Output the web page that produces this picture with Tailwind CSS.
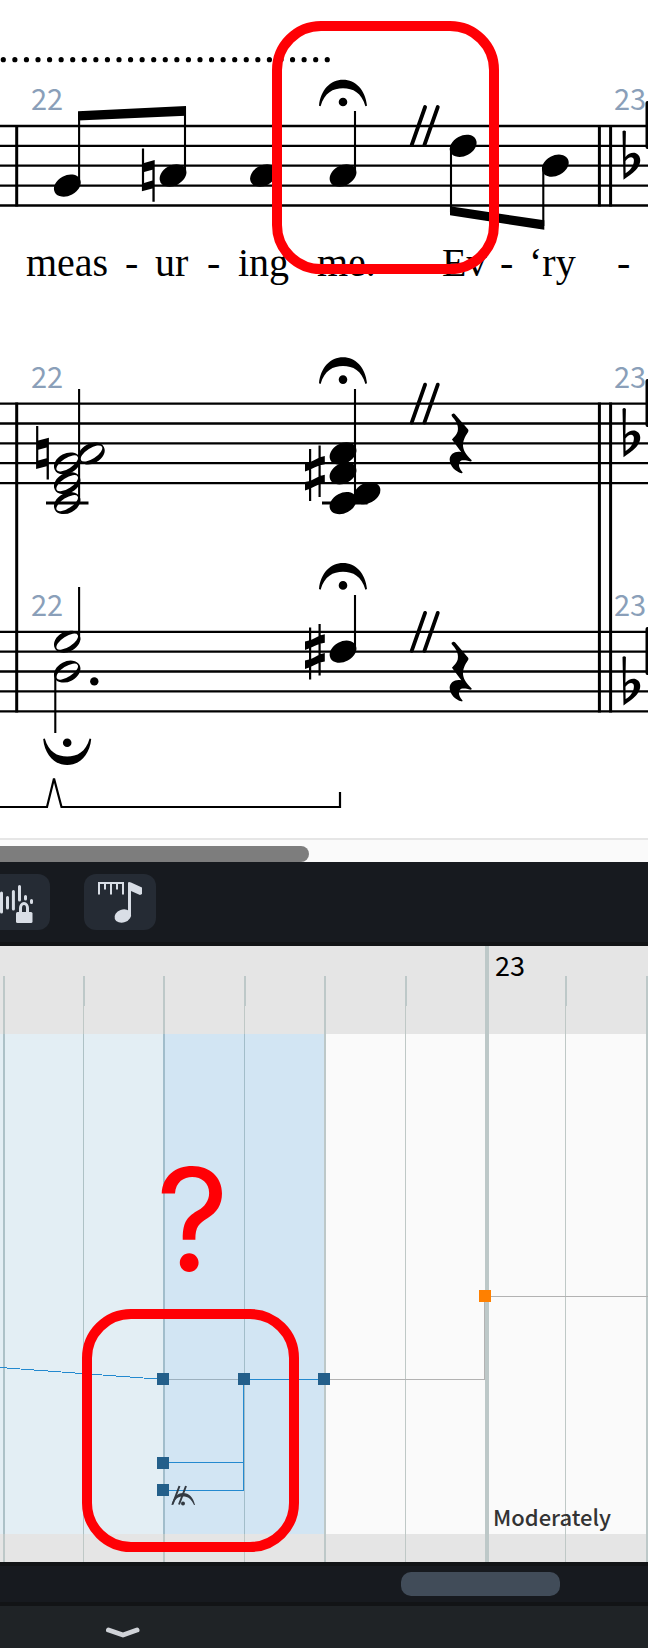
<!DOCTYPE html>
<html lang="en">
<head>
<meta charset="utf-8">
<meta name="viewport" content="width=device-width, initial-scale=1">
<title>Score and tempo track</title>
<script src="https://cdn.jsdelivr.net/npm/@tailwindcss/browser@4"></script>
</head>
<body class="bg-[#1f2326] font-['Noto_Sans_CJK_SC','Noto_Sans',sans-serif]">
<main class="flex min-h-screen flex-col">

  <!-- Score -->
  <section class="bg-white" aria-label="Score">
    <svg class="block h-auto w-full" viewBox="0 0 648 838" role="img" aria-label="Measures 22 and 23">
      <defs>
        <ellipse id="head" rx="14.2" ry="10.1" transform="rotate(-28)"/>
        <path id="half" fill-rule="evenodd" transform="rotate(-28)" d="M-14 0A14 10 0 1 0 14 0A14 10 0 1 0 -14 0ZM-12.4 1A12.4 5.2 -5 1 0 12.4 -1A12.4 5.2 -5 1 0 -12.4 1Z"/>
        <path id="natural" d="M-1.1-27.3H1.1V-12.8L11.7-15.6V26H9.4V12.8L-1.1 15.6ZM1.1-3.6V7.2L9.4 4.8V-6Z" fill-rule="evenodd"/>
        <path id="sharp" d="M-6-24.3h2.2V27.7H-6ZM3.5-27.8H5.7V23.7H3.5ZM-10-10.3Q-5-10.3 0-13.6T9.8-17.4V-9Q5-8.6 0-6T-10-1.8ZM-10 8.7Q-5 8.6 0 5.3T9.8 1.4V9.8Q5 10.2 0 13T-10 17.2Z"/>
        <path id="flat" d="M-1.8-32.2Q-.2-34 1.6-32.2L1.1-6.6C5-11 10.5-12 14-8.6C17.6-4.5 16 1.5 11.5 6.5C8 10.4 3 13.5-.8 16.2ZM1.2-2.6L1.3 9.8C6 7 9.8 2 9.6-3.4C9.2-7.8 4-7 1.2-2.6Z" fill-rule="evenodd"/>
        <path id="fermata" d="M-24 26C-22.5 10-12.5 0 0 0S22.5 10 24 26L22.4 26.6C18.5 13 10 8.6 0 8.6S-18.5 13-22.4 26.6ZM0 18a4.3 4.3 0 1 1 0 8.6a4.3 4.3 0 0 1 0-8.6Z"/>
        <path id="caesura" d="M0 38L13.4 0M12.7 38L26.1 0" fill="none" stroke="#000" stroke-width="3.8" stroke-linecap="round"/>
        <path id="rest" transform="scale(.3333)" d="M2 1C-4 2-3 7 1 11C16 27 19 42 16 54C13 64 6 70-1 78L27 116C9 112-7 121-8 138C-7 160 10 174 27 179C30 180 33 177 29 174C17 160 18 146 27 141C35 139 44 141 55 144C59 144 59 140 56 138C42 124 32 111 32 94C33 76 42 64 47 56C50 51 48 48 45 45L8 2C6 0 4 0 2 1Z"/>
        <path id="staff" d="M0 0H648M0 19.9H648M0 39.7H648M0 59.6H648M0 79.5H648" fill="none" stroke="#000" stroke-width="2.3"/>
      </defs>

      <path d="M3.3 59.7H328" fill="none" stroke="#000" stroke-width="5.2" stroke-linecap="round" stroke-dasharray="0 11.57"/>

      <g font-size="29" fill="#8a9fb9">
        <text x="31" y="110">22</text>
        <text x="614" y="110">23</text>
        <text x="31" y="388">22</text>
        <text x="614" y="388">23</text>
        <text x="31" y="616">22</text>
        <text x="614" y="616">23</text>
      </g>

      <!-- Staves and barlines -->
      <use href="#staff" y="126"/>
      <use href="#staff" y="403.6"/>
      <use href="#staff" y="631.8"/>
      <path d="M16.7 125V206.5M599.4 125V206.5M610.6 125V206.5M16.7 402.5V712.5M599.4 402.5V712.5M610.6 402.5V712.5" stroke="#000" stroke-width="3"/>
      <path d="M46 503H88.5M322 503H367.5" stroke="#000" stroke-width="3"/>

      <!-- Vocal line -->
      <path d="M78 111.3L186 106V115.7L78 120.5ZM450 206.3L544.3 220.3V229.8L450 215.3Z"/>
      <path d="M79.1 112V183M185 107V173M355 111V173M451 148V212M543.3 168V226" stroke="#000" stroke-width="2.1"/>
      <use href="#head" x="67.3" y="185.6"/>
      <use href="#head" x="173" y="175.5"/>
      <use href="#head" x="263.5" y="175.5"/>
      <use href="#head" x="343" y="175.5"/>
      <use href="#head" x="463.2" y="145.8"/>
      <use href="#head" x="555.3" y="165.7"/>
      <use href="#natural" x="143" y="175.7"/>

      <!-- Upper piano staff -->
      <path d="M79.1 389V502M355 389V502" stroke="#000" stroke-width="2.1"/>
      <use href="#half" x="67.2" y="463.4"/>
      <use href="#half" x="67.2" y="483.2"/>
      <use href="#half" x="67.2" y="503.1"/>
      <use href="#half" x="91.5" y="453.5"/>
      <use href="#natural" x="37.2" y="453.4"/>
      <use href="#head" x="343" y="453.5"/>
      <use href="#head" x="343" y="473.3"/>
      <use href="#head" x="367" y="493.2"/>
      <use href="#head" x="343" y="503.1"/>
      <use href="#sharp" x="315" y="473.3"/>
      <use href="#rest" x="452.3" y="413.5"/>

      <!-- Lower piano staff -->
      <path d="M79.1 587V640M55.3 673V733M355 595V650" stroke="#000" stroke-width="2.1"/>
      <use href="#half" x="67.2" y="641.7"/>
      <use href="#half" x="67.2" y="671.6"/>
      <circle cx="94.3" cy="681.4" r="4.2"/>
      <use href="#head" x="343" y="651.7"/>
      <use href="#sharp" x="315" y="651.7"/>
      <use href="#rest" x="452.3" y="641.7"/>

      <use href="#fermata" x="343" y="79.7"/>
      <use href="#fermata" x="343" y="357.3"/>
      <use href="#fermata" x="343" y="563.1"/>
      <use href="#fermata" transform="translate(67.2 765) scale(1 -1)"/>
      <use href="#caesura" x="411.7" y="107"/>
      <use href="#caesura" x="411.7" y="384.6"/>
      <use href="#caesura" x="411.7" y="612.9"/>
      <use href="#flat" x="624.3" y="163.5"/>
      <use href="#flat" x="624.3" y="441.1"/>
      <use href="#flat" x="624.3" y="689.3"/>
      <path d="M647.5 103V147M647.5 381V425M647.5 629V673" stroke="#000" stroke-width="4" stroke-linecap="round"/>

      <path d="M0 807H47L54 778.5L61.5 807H340V792" fill="none" stroke="#000" stroke-width="2.2"/>

      <!-- Lyrics -->
      <g class="font-['Liberation_Serif',serif]" font-size="40">
        <text x="26" y="276">meas</text>
        <text x="125" y="276">-</text>
        <text x="155" y="276">ur</text>
        <text x="207" y="276">-</text>
        <text x="238" y="276">ing</text>
        <text x="317" y="276">me.</text>
        <text x="442" y="276">Ev</text>
        <text x="500" y="276">-</text>
        <text x="529" y="276">‘ry</text>
        <text x="617" y="276">-</text>
      </g>

      <rect x="277" y="26" width="217" height="243" rx="44" fill="none" stroke="#ff0005" stroke-width="10"/>
    </svg>
    <div class="h-6 border-t-2 border-[#e6e6e6] bg-[#fafafa] pt-1.5">
      <div class="h-4 w-[309px] rounded-r-full bg-[#7d7d7d]" role="scrollbar" aria-label="Scroll score" aria-controls="tempo" aria-valuenow="0"></div>
    </div>
  </section>

  <!-- Toolbar -->
  <div class="flex h-21 gap-[34px] border-b-4 border-[#121416] bg-[#171a1f] pt-3">
    <button class="-ml-[22px] h-14 w-18 rounded-xl bg-[#252b34]" aria-label="Lock to audio">
      <svg class="block" width="72" height="56" viewBox="0 0 72 56" fill="none" stroke="#d9dee6" stroke-linecap="round">
        <path d="M23.5 19V38M29.5 23.5V34M35.4 17.5V35M41.5 12.5V26M47.5 22.5V25M53.5 26.5V28.5" stroke-width="3"/>
        <path d="M42.5 39V34a3.5 4.5 0 0 1 7 0V39" stroke-width="3"/>
        <rect x="38" y="38" width="16.5" height="11" rx="1.5" fill="#d9dee6" stroke="none"/>
      </svg>
    </button>
    <button class="h-14 w-18 rounded-xl bg-[#252b34]" aria-label="Time and note values">
      <svg class="block" width="72" height="56" viewBox="0 0 72 56" fill="#d9dee6">
        <path d="M15 20.5V9H39V20.5M21 9V15.5M27 9V20.5M33 9V15.5" fill="none" stroke="#d9dee6" stroke-width="2"/>
        <path d="M44 8.5Q45 7.5 47 8.5L58 13.5V20L56 21L47 17V42H44Z"/>
        <ellipse cx="38.8" cy="42" rx="8.5" ry="6.5" transform="rotate(-20 38.8 42)"/>
      </svg>
    </button>
  </div>

  <!-- Tempo track -->
  <section id="tempo" aria-label="Tempo track">
    <svg class="block h-auto w-full" viewBox="0 0 648 616" role="img" aria-label="Tempo graph">
      <g shape-rendering="crispEdges">
        <rect width="648" height="616" fill="#e5e5e5"/>
        <rect y="88" width="648" height="500" fill="#fafafa"/>
        <path d="M4 30V616M164 30V616M325 30V616M647 30V616M84 30V60M245 30V60M406 30V60M566 30V60" stroke="#bdc8c8" stroke-width="2"/>
        <path d="M83.5 60V616M244.5 60V616M405.5 60V616M565.5 60V616" stroke="#bfc8c6"/>
        <path d="M487 0V616" stroke="#bdc8c8" stroke-width="4"/>
        <rect y="88" width="163" height="500" fill="#1e8cc8" fill-opacity=".1"/>
        <rect x="163" y="88" width="161" height="500" fill="#3291d7" fill-opacity=".2"/>
        <path d="M163 433.5H244" stroke="#9cb0be"/>
        <path d="M324 433.5H484.5V350.5H648" fill="none" stroke="#b2b2b2"/>
        <path d="M0 421.5L157 433" fill="none" stroke="#2389cf"/>
        <path d="M324 433.5H243.5V544.5H163M163 516.5H243" fill="none" stroke="#2389cf"/>
        <path d="M157 427h12v12h-12zM238 427h12v12h-12zM318 427h12v12h-12zM157 511h12v12h-12zM157 538h12v12h-12z" fill="#245f8a"/>
        <path d="M479 344h12v12h-12z" fill="#ff8000"/>
      </g>
      <g stroke="#333a42" fill="#333a42">
        <path d="M172.5 558.5L179.5 540M179 558.5L186 540" stroke-width="2"/>
        <path stroke="none" d="M171.5 559C174 551 177 547 183 547S193 551 195 559H194C191.5 553 188 550.5 183 550.5S175 553 172.5 559Z"/>
        <circle cx="183" cy="557.5" r="2" stroke="none"/>
      </g>
      <text x="495" y="30" font-size="27">23</text>
      <text x="493" y="580" font-size="22" font-weight="500" fill="#333">Moderately</text>
      <text class="font-[Inter,sans-serif]" x="156" y="325" font-size="143" fill="#ff0005">?</text>
      <rect x="87" y="368" width="207" height="233" rx="44" fill="none" stroke="#ff0005" stroke-width="10"/>
    </svg>
  </section>

  <div class="h-11 border-y-4 border-[#121416] bg-[#171a1f] pt-1.5">
    <div class="ml-[401px] h-6 w-[159px] rounded-[10px] bg-[#414c59]" role="scrollbar" aria-label="Scroll tempo track" aria-controls="tempo" aria-valuenow="60"></div>
  </div>

  <footer class="h-[42px] bg-[#1f2326] px-[105px] pt-[19px]">
    <button class="block" aria-label="Collapse panel">
      <svg class="block" width="36" height="14" viewBox="0 0 36 14" fill="none" stroke="#d0d3d8" stroke-width="5" stroke-linecap="round" stroke-linejoin="round">
        <path d="M3.5 5L18 10L32 5"/>
      </svg>
    </button>
  </footer>
</main>
</body>
</html>
